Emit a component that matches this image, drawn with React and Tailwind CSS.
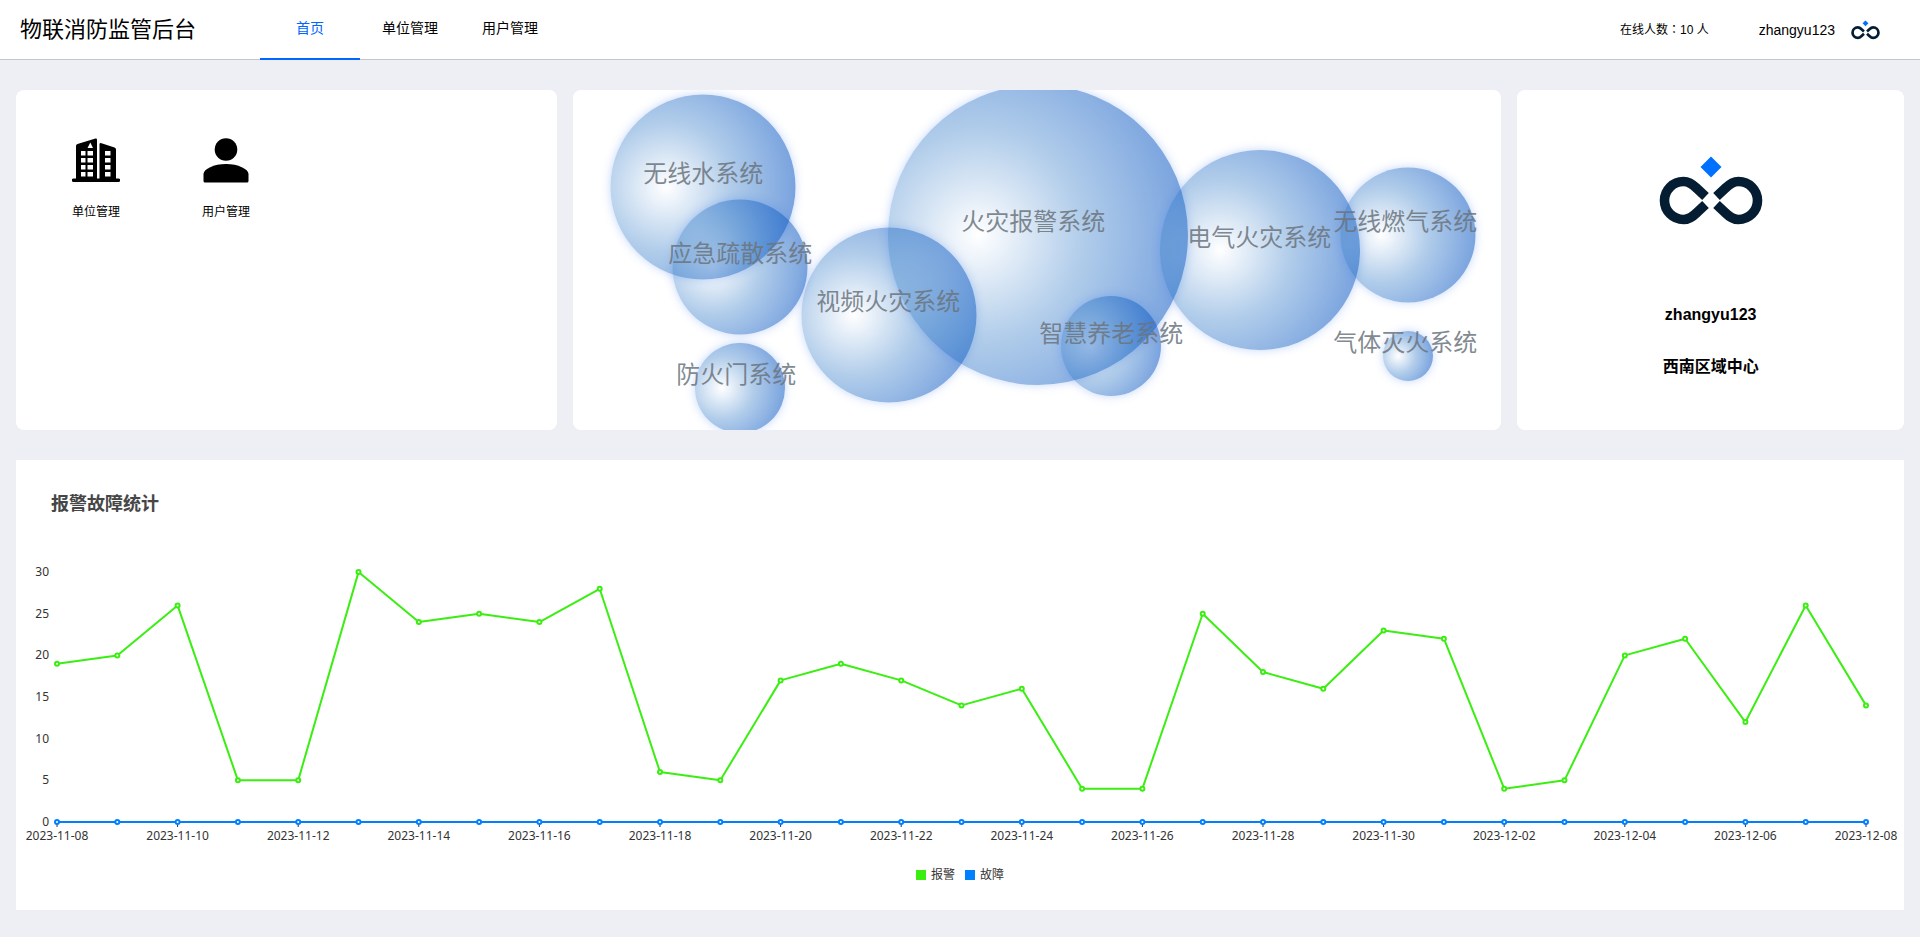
const FONT = "font-['Liberation_Sans','Noto_Sans_CJK_SC',sans-serif]"

const NAV = ['首页', '单位管理', '用户管理']

// x / y are the centre of a bubble inside the panel, labels sit at lx / ly
const BUBBLES = [
  { name: '无线水系统', x: 130, y: 97, d: 185, lx: 130, ly: 84 },
  { name: '应急疏散系统', x: 167, y: 177, d: 135, lx: 167, ly: 164 },
  { name: '防火门系统', x: 167, y: 298, d: 90, lx: 163, ly: 285 },
  { name: '视频火灾系统', x: 316, y: 225, d: 175, lx: 315, ly: 212 },
  { name: '火灾报警系统', x: 465, y: 145, d: 300, lx: 460, ly: 132 },
  { name: '智慧养老系统', x: 538, y: 256, d: 100, lx: 538, ly: 244 },
  { name: '电气火灾系统', x: 687, y: 160, d: 200, lx: 686, ly: 148 },
  { name: '无线燃气系统', x: 835, y: 145, d: 135, lx: 832, ly: 132 },
  { name: '气体灭火系统', x: 835, y: 266, d: 50, lx: 832, ly: 253 },
]

const ALARMS = [
  19, 20, 26, 5, 5, 30, 24, 25, 24, 28, 6, 5, 17, 19, 17, 14, 16, 4, 4, 25, 18, 16, 23, 22, 4, 5,
  20, 22, 12, 26, 14,
]
const FAULTS = ALARMS.map(() => 0)
const DATES = ALARMS.map((_, i) => {
  const day = 8 + i
  return day <= 30
    ? `2023-11-${String(day).padStart(2, '0')}`
    : `2023-12-${String(day - 30).padStart(2, '0')}`
})

function Logo({ className }) {
  return (
    <svg viewBox="0 0 104 70" className={className} aria-hidden="true">
      <path d="M52 0.5 62.5 11 52 21.5 41.5 11Z" fill="#0070ff" />
      <g fill="none" stroke="#051d33" strokeWidth="9.6">
        <path d="M46.500 40.500 38 32.500C33 27.500 29.500 25.500 24.500 25.500A19 19 0 0 0 24.500 63.500C29.500 63.500 33 61.500 38 56.500L46.500 48.500" />
        <path d="M57.500 40.500 66 32.500C71 27.500 74.500 25.500 79.500 25.500A19 19 0 0 1 79.500 63.500C74.500 63.500 71 61.500 66 56.500L57.500 48.500" />
      </g>
    </svg>
  )
}

function BuildingIcon() {
  return (
    <svg viewBox="0 0 48 46" className="h-[46px] w-12" aria-hidden="true">
      <path
        fillRule="evenodd"
        d="M4 40.500V8Q4 6.500 5.500 6L23.500 .6Q25 .2 25 2V40.500H27.500V6.500Q27.500 4.500 29.500 5.200L42.500 9.500Q44 10 44 11.500V40.500H46.500A1.700 1.700 0 0 1 46.500 44H1.500A1.700 1.700 0 0 1 1.500 40.500ZM18.300 4.500 15.500 10H21ZM9 13V17.500H13.500V13ZM15.500 13V17.500H21V13ZM9 20V24.500H13.500V20ZM15.500 20V24.500H21V20ZM9 27V31.500H13.500V27ZM15.500 27V31.500H21V27ZM9 34V38.500H13.500V34ZM15.500 34V38.500H21V34ZM33 13V17.500H38.500V13ZM33 20V24.500H38.500V20ZM33 27V31.500H38.500V27ZM33 34V38.500H38.500V34Z"
      />
    </svg>
  )
}

function UserIcon() {
  return (
    <svg viewBox="0 0 48 46" className="h-[46px] w-12" aria-hidden="true">
      <circle cx="24" cy="11.500" r="11.300" />
      <path d="M1.500 43V36C1.500 31 12 26 24 26S46.500 31 46.500 36V43Q46.500 44.500 45 44.500H3Q1.500 44.500 1.500 43Z" />
    </svg>
  )
}

function Header() {
  return (
    <header className="flex h-[60px] items-center border-b border-[#c4c6cc] bg-white">
      <h1 className="w-[260px] shrink-0 pl-5 text-[22px] leading-8">物联消防监管后台</h1>
      <nav className="flex h-[60px] text-sm">
        {NAV.map((item, i) => (
          <a
            key={item}
            href="#"
            className={
              i === 0
                ? 'h-[60px] w-[100px] border-b-2 border-[#0066ff] text-center leading-[56px] text-[#0066ff]'
                : 'h-[60px] w-[100px] text-center leading-[56px]'
            }
          >
            {item}
          </a>
        ))}
      </nav>
      <div className="ml-auto flex items-center pr-10">
        <span className="mr-[50px] font-['Liberation_Sans','Noto_Sans_CJK_TC',sans-serif] text-xs">
          在线人数：10 人
        </span>
        <span className="mr-4 text-sm">zhangyu123</span>
        <Logo className="h-5 w-[29px]" />
      </div>
    </header>
  )
}

function Shortcuts() {
  return (
    <section className="flex rounded-lg bg-white px-[15px] pt-12">
      <a href="#" className="flex h-fit w-[130px] flex-col items-center gap-5 text-xs">
        <BuildingIcon />
        单位管理
      </a>
      <a href="#" className="flex h-fit w-[130px] flex-col items-center gap-5 text-xs">
        <UserIcon />
        用户管理
      </a>
    </section>
  )
}

function Bubbles() {
  return (
    <section className="relative overflow-hidden rounded-lg bg-white">
      {BUBBLES.map((b) => (
        <div
          key={b.name}
          className="absolute -translate-x-1/2 -translate-y-1/2 rounded-full bg-[radial-gradient(circle_farthest-side_at_30%_50%,rgba(30,110,195,0),rgba(30,110,195,0.35)_50%,rgba(9,86,195,0.54))] shadow-[0_0_10px_rgba(60,120,240,0.3)]"
          style={{ left: `${(b.x / 928) * 100}%`, top: b.y, width: b.d, height: b.d }}
        />
      ))}
      {BUBBLES.map((b) => (
        <span
          key={b.name}
          className="absolute -translate-x-1/2 -translate-y-1/2 text-2xl whitespace-nowrap text-[#6b747d]/85"
          style={{ left: `${(b.lx / 928) * 100}%`, top: b.ly }}
        >
          {b.name}
        </span>
      ))}
    </section>
  )
}

function Profile() {
  return (
    <section className="flex flex-col items-center rounded-lg bg-white pt-[66px] text-base font-bold">
      <Logo className="mb-[77px] h-[70px] w-[104px]" />
      <p>zhangyu123</p>
      <p className="mt-7">西南区域中心</p>
    </section>
  )
}

// plot area in chart pixels
const W = 1888
const LEFT = 41
const STEP = 60.3
const BASE = 362
const UNIT = 8.33

function Series({ values, color }) {
  const points = values.map((v, i) => [LEFT + i * STEP, BASE - v * UNIT])
  return (
    <g stroke={color} strokeWidth="2">
      <polyline points={points.map((p) => p.join(',')).join(' ')} fill="none" strokeLinejoin="bevel" />
      {points.map(([x, y]) => (
        <circle key={x} cx={x} cy={y} r="2" fill="#fff" />
      ))}
    </g>
  )
}

function Trend() {
  return (
    <section className="relative mt-[30px] bg-white pb-5 font-['Noto_Sans','Noto_Sans_CJK_SC',sans-serif]">
      <h2 className="absolute top-[29px] left-[35px] text-lg font-bold text-[#464646]">报警故障统计</h2>
      <svg viewBox={`0 0 ${W} 400`} className="block w-full" role="img" aria-label="报警故障统计">
        <g fontSize="12" fill="#333">
          {[0, 5, 10, 15, 20, 25, 30].map((v) => (
            <text key={v} x="33" y={BASE - v * UNIT + 4} textAnchor="end">
              {v}
            </text>
          ))}
          {DATES.map((date, i) =>
            i % 2 === 0 ? (
              <g key={date}>
                <path d={`M${LEFT + i * STEP} ${BASE}v5`} stroke="#333" />
                <text x={LEFT + i * STEP} y="380" textAnchor="middle">
                  {date}
                </text>
              </g>
            ) : null,
          )}
        </g>
        <Series values={ALARMS} color="#3bee12" />
        <Series values={FAULTS} color="#0080ff" />
      </svg>
      <ul className="flex h-[30px] items-center justify-center gap-[10px] text-xs text-[#333]">
        <li className="flex items-center gap-[5px]">
          <i className="size-[10px] bg-[#3bee12]" />
          报警
        </li>
        <li className="flex items-center gap-[5px]">
          <i className="size-[10px] bg-[#0080ff]" />
          故障
        </li>
      </ul>
    </section>
  )
}

export default function App() {
  return (
    <div className={`min-h-screen bg-[#edeff5] text-black ${FONT}`}>
      <Header />
      <main className="px-4 pt-[30px] pb-[27px]">
        <div className="grid h-[340px] grid-cols-[7fr_12fr_5fr] gap-4">
          <Shortcuts />
          <Bubbles />
          <Profile />
        </div>
        <Trend />
      </main>
    </div>
  )
}
